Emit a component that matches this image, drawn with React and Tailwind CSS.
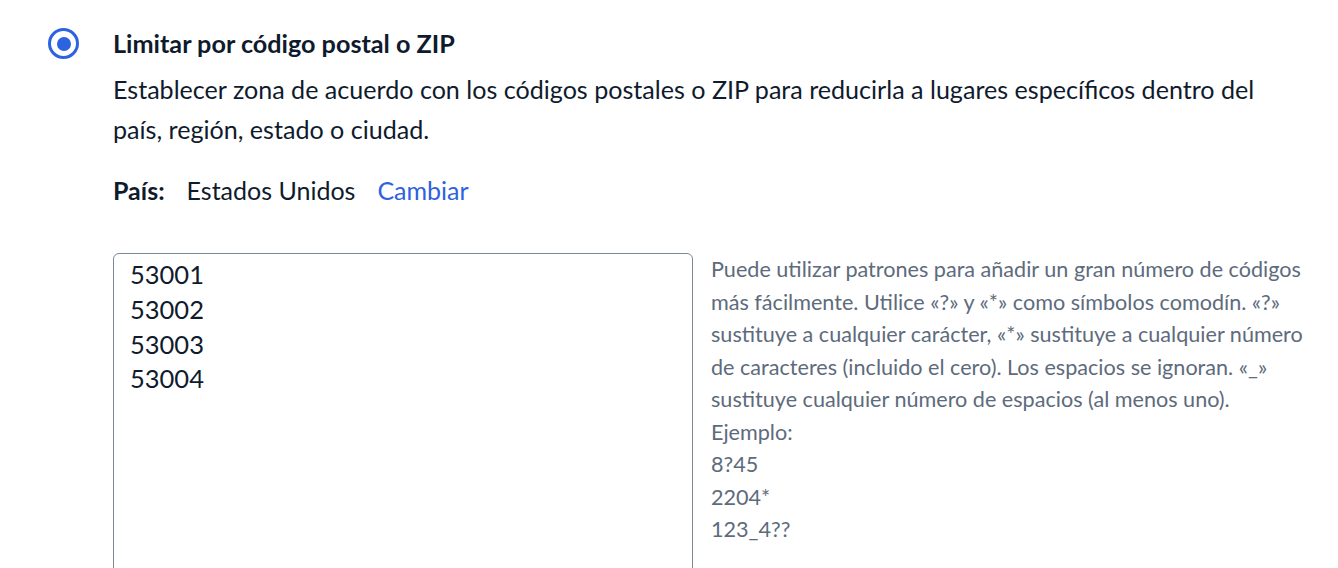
import { useState } from "react";

export default function App() {
  const [codes, setCodes] = useState("53001\n53002\n53003\n53004");

  return (
    <div className="min-h-screen bg-white font-['Lato',sans-serif] text-[#0f1b2d] overflow-hidden">
      <div className="flex gap-[34px] pl-[48px] pt-[28px]">
        {/* Radio */}
        <div className="w-[31px] h-[31px] shrink-0 rounded-full border-[3.5px] border-[#2d62e0] flex items-center justify-center">
          <div className="w-[14px] h-[14px] rounded-full bg-[#2d62e0]" />
        </div>

        <div className="w-[1200px] shrink-0">
          <h2 className="text-[25.2px] leading-[30px] font-bold">Limitar por código postal o ZIP</h2>
          <p className="mt-[11px] w-[1180px] text-[25.1px] leading-[40px]">
            Establecer zona de acuerdo con los códigos postales o ZIP para reducirla a lugares específicos dentro del país, región, estado o ciudad.
          </p>

          <div className="mt-[26px] flex gap-[22px] text-[25px] leading-[30px]">
            <span className="font-bold">País:</span>
            <span>Estados Unidos</span>
            <button className="text-[#2d62e0]">Cambiar</button>
          </div>

          <div className="mt-[48px] flex gap-[18px]">
            <textarea
              value={codes}
              onChange={(e) => setCodes(e.target.value)}
              className="w-[580px] h-[340px] shrink-0 resize-none rounded-[6px] border border-[#7d8894] pl-[16px] pt-[3px] text-[25.5px] leading-[34.8px] text-[#0f1b2d] outline-none font-['Lato',sans-serif]"
            />
            <div className="w-[602px] shrink-0 text-[21.6px] leading-[32.5px] text-[#5d6b7c]">
              <p>
                Puede utilizar patrones para añadir un gran número de códigos más fácilmente. Utilice «?» y «*» como símbolos comodín. «?» sustituye a cualquier carácter, «*» sustituye a cualquier número de caracteres (incluido el cero). Los espacios se ignoran. «_» sustituye cualquier número de espacios (al menos uno).
              </p>
              <p>Ejemplo:</p>
              <p>8?45</p>
              <p>2204*</p>
              <p>123_4??</p>
            </div>
          </div>
        </div>
      </div>
    </div>
  );
}
